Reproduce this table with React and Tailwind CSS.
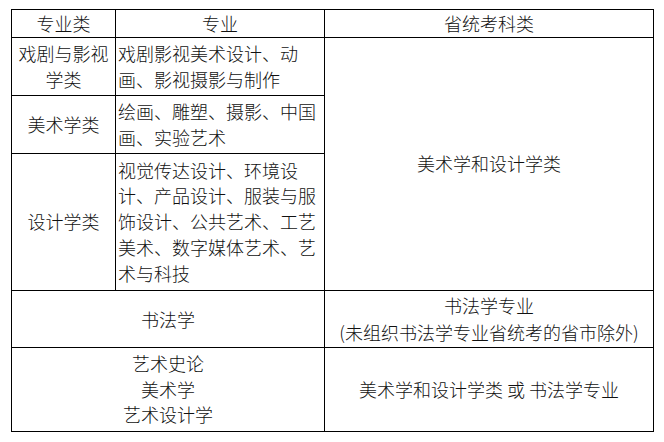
import React from 'react';

const font = { fontFamily: '"Noto Sans CJK SC", "Noto Sans", sans-serif' };

const cell = 'border border-black align-middle px-[2px] py-0';

export default function App() {
  return (
    <div className="min-h-screen bg-white pl-[11px] pt-[9px]" style={font}>
      <table className="table-fixed border-collapse w-[642px] text-[18px] leading-[25.7px] font-light text-[#111]">
        <colgroup>
          <col className="w-[104px]" />
          <col className="w-[209px]" />
          <col className="w-[329px]" />
        </colgroup>
        <tbody>
          <tr className="h-[28px]">
            <td className={`${cell} text-center`}>专业类</td>
            <td className={`${cell} text-center`}>专业</td>
            <td className={`${cell} text-center`}>省统考科类</td>
          </tr>
          <tr className="h-[58px]">
            <td className={`${cell} text-center`}>戏剧与影视学类</td>
            <td className={`${cell} text-left`}>戏剧影视美术设计、动画、影视摄影与制作</td>
            <td className={`${cell} text-center`} rowSpan={3}>美术学和设计学类</td>
          </tr>
          <tr className="h-[58px]">
            <td className={`${cell} text-center`}>美术学类</td>
            <td className={`${cell} text-left`}>绘画、雕塑、摄影、中国画、实验艺术</td>
          </tr>
          <tr className="h-[137px]">
            <td className={`${cell} text-center`}>设计学类</td>
            <td className={`${cell} text-left`}>
              视觉传达设计、环境设计、产品设计、服装与服饰设计、公共艺术、工艺美术、数字媒体艺术、艺术与科技
            </td>
          </tr>
          <tr className="h-[57px]">
            <td className={`${cell} text-center leading-[27px]`} colSpan={2}>书法学</td>
            <td className={`${cell} text-center leading-[27px]`}>
              书法学专业
              <br />
              (未组织书法学专业省统考的省市除外)
            </td>
          </tr>
          <tr className="h-[84px]">
            <td className={`${cell} text-center`} colSpan={2}>
              艺术史论
              <br />
              美术学
              <br />
              艺术设计学
            </td>
            <td className={`${cell} text-center`}>美术学和设计学类 或 书法学专业</td>
          </tr>
        </tbody>
      </table>
    </div>
  );
}
